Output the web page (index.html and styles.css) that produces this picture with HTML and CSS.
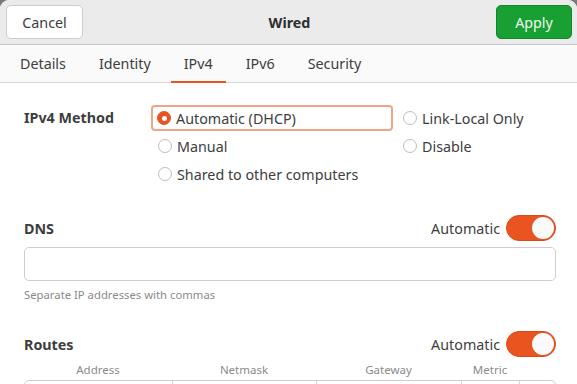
FILE: index.html
```html
<!DOCTYPE html>
<html>
<head>
    <title>Wired</title>
    <link rel="stylesheet" href="styles.css">
</head>
<body>
<div class="window">
    <header class="headerbar">
        <button class="btn btn-cancel">Cancel</button>
        <h1 class="title">Wired</h1>
        <button class="btn btn-apply">Apply</button>
    </header>

    <nav class="tabs">
        <span class="tab">Details</span>
        <span class="tab">Identity</span>
        <span class="tab active">IPv4</span>
        <span class="tab">IPv6</span>
        <span class="tab">Security</span>
    </nav>

    <main class="content">
        <section class="method">
            <div class="label-bold">IPv4 Method</div>
            <div class="radios">
                <div class="radio focused"><span class="dot checked"></span>Automatic (DHCP)</div>
                <div class="radio"><span class="dot"></span>Link-Local Only</div>
                <div class="radio"><span class="dot"></span>Manual</div>
                <div class="radio"><span class="dot"></span>Disable</div>
                <div class="radio"><span class="dot"></span>Shared to other computers</div>
            </div>
        </section>

        <section class="dns">
            <div class="row">
                <div class="label-bold">DNS</div>
                <div class="auto">Automatic <span class="switch"><span class="knob"></span></span></div>
            </div>
            <div class="entry"></div>
            <div class="hint">Separate IP addresses with commas</div>
        </section>

        <section class="routes">
            <div class="row">
                <div class="label-bold">Routes</div>
                <div class="auto">Automatic <span class="switch"><span class="knob"></span></span></div>
            </div>
            <div class="cols">
                <span class="c-addr">Address</span>
                <span class="c-mask">Netmask</span>
                <span class="c-gw">Gateway</span>
                <span class="c-metric">Metric</span>
                <span class="c-btn"></span>
            </div>
            <div class="route-row">
                <span class="c-addr"></span>
                <span class="c-mask"></span>
                <span class="c-gw"></span>
                <span class="c-metric"></span>
                <span class="c-btn"></span>
            </div>
        </section>
    </main>
</div>
</body>
</html>
```

FILE: styles.css
```css
html, body {
    margin: 0;
    padding: 0;
    height: 100%;
    background-color: #7a7a7a;
    overflow: hidden;
}
body {
    font-family: "Noto Sans", "Open Sans", sans-serif;
    font-size: 14.3px;
    color: #3d3d3d;
}
.window {
    height: 100%;
    border-radius: 9px 9px 0 0;
    overflow: hidden;
    background-color: #ffffff;
}
.headerbar {
    height: 44px;
    background-color: #ebebeb;
    border-bottom: 1px solid #c7c7c7;
    display: flex;
    align-items: center;
    justify-content: space-between;
    padding: 0 5px 0 6px;
}
.btn {
    height: 34px;
    border-radius: 5px;
    font-family: inherit;
    font-size: 14.3px;
    padding: 0;
}
.btn-cancel {
    width: 77px;
    background-color: #ffffff;
    border: 1px solid #cdcdcd;
    color: #3d3d3d;
}
.btn-apply {
    width: 76px;
    background-color: #18a033;
    border: 1px solid #10882a;
    color: #eef8ef;
}
.title {
    margin: 0;
    font-size: 14.3px;
    font-weight: bold;
    color: #2e2e2e;
}
.tabs {
    height: 37px;
    background-color: #fafafa;
    border-bottom: 1px solid #d6d6d6;
    display: flex;
    padding-left: 7px;
}
.tab {
    padding: 0 13px;
    margin-right: 7px;
    line-height: 37px;
    border-bottom: 2px solid transparent;
    height: 36px;
}
.tab.active {
    border-bottom-color: #e95420;
}
.content {
    padding: 22px 21px 0 24px;
}
.label-bold {
    font-weight: bold;
}
.method {
    display: flex;
}
.method .label-bold {
    width: 127px;
    line-height: 26px;
}
.radios {
    display: grid;
    grid-template-columns: 242px auto;
    column-gap: 3px;
    row-gap: 2px;
}
.radio {
    height: 26px;
    display: flex;
    align-items: center;
    padding-left: 6px;
    box-sizing: border-box;
    border: 1px solid transparent;
    border-radius: 4px;
}
.radio.focused {
    border: 2px solid #f2a488;
    padding-left: 4px;
}
.dot {
    width: 14px;
    height: 14px;
    box-sizing: border-box;
    border: 1px solid #bdbdbd;
    border-radius: 50%;
    background-color: #ffffff;
    margin-right: 5px;
    position: relative;
}
.dot.checked {
    border-color: #e95420;
    background-color: #e95420;
}
.dot.checked::after {
    content: "";
    position: absolute;
    left: 3.5px;
    top: 3.5px;
    width: 5px;
    height: 5px;
    border-radius: 50%;
    background-color: #ffffff;
}
.row {
    display: flex;
    justify-content: space-between;
    align-items: center;
    height: 26px;
}
.auto {
    display: flex;
    align-items: center;
}
.switch {
    width: 50px;
    height: 26px;
    box-sizing: border-box;
    border-radius: 13px;
    background-color: #e95420;
    border: 1px solid #d9491a;
    margin-left: 6px;
    display: flex;
    justify-content: flex-end;
    padding: 1px;
}
.knob {
    width: 22px;
    height: 22px;
    border-radius: 50%;
    background-color: #fafafa;
}
.dns {
    margin-top: 28px;
}
.entry {
    margin-top: 6px;
    height: 34px;
    box-sizing: border-box;
    border: 1px solid #cdcdcd;
    border-radius: 5px;
    background-color: #ffffff;
}
.hint {
    margin-top: 7px;
    font-size: 11.3px;
    line-height: 14px;
    color: #8a8a8a;
}
.routes {
    margin-top: 29px;
}
.cols, .route-row {
    display: grid;
    grid-template-columns: 148px 144px 145px 58px 1fr;
}
.cols {
    margin-top: 6px;
    font-size: 11.5px;
    line-height: 14px;
    color: #8a8a8a;
    text-align: center;
}
.route-row {
    margin-top: 3px;
    height: 30px;
    border: 1px solid #cdcdcd;
    border-radius: 5px 5px 0 0;
    box-sizing: border-box;
}
.route-row span {
    border-right: 1px solid #d6d6d6;
}
.route-row .c-btn {
    border-right: none;
}
```
